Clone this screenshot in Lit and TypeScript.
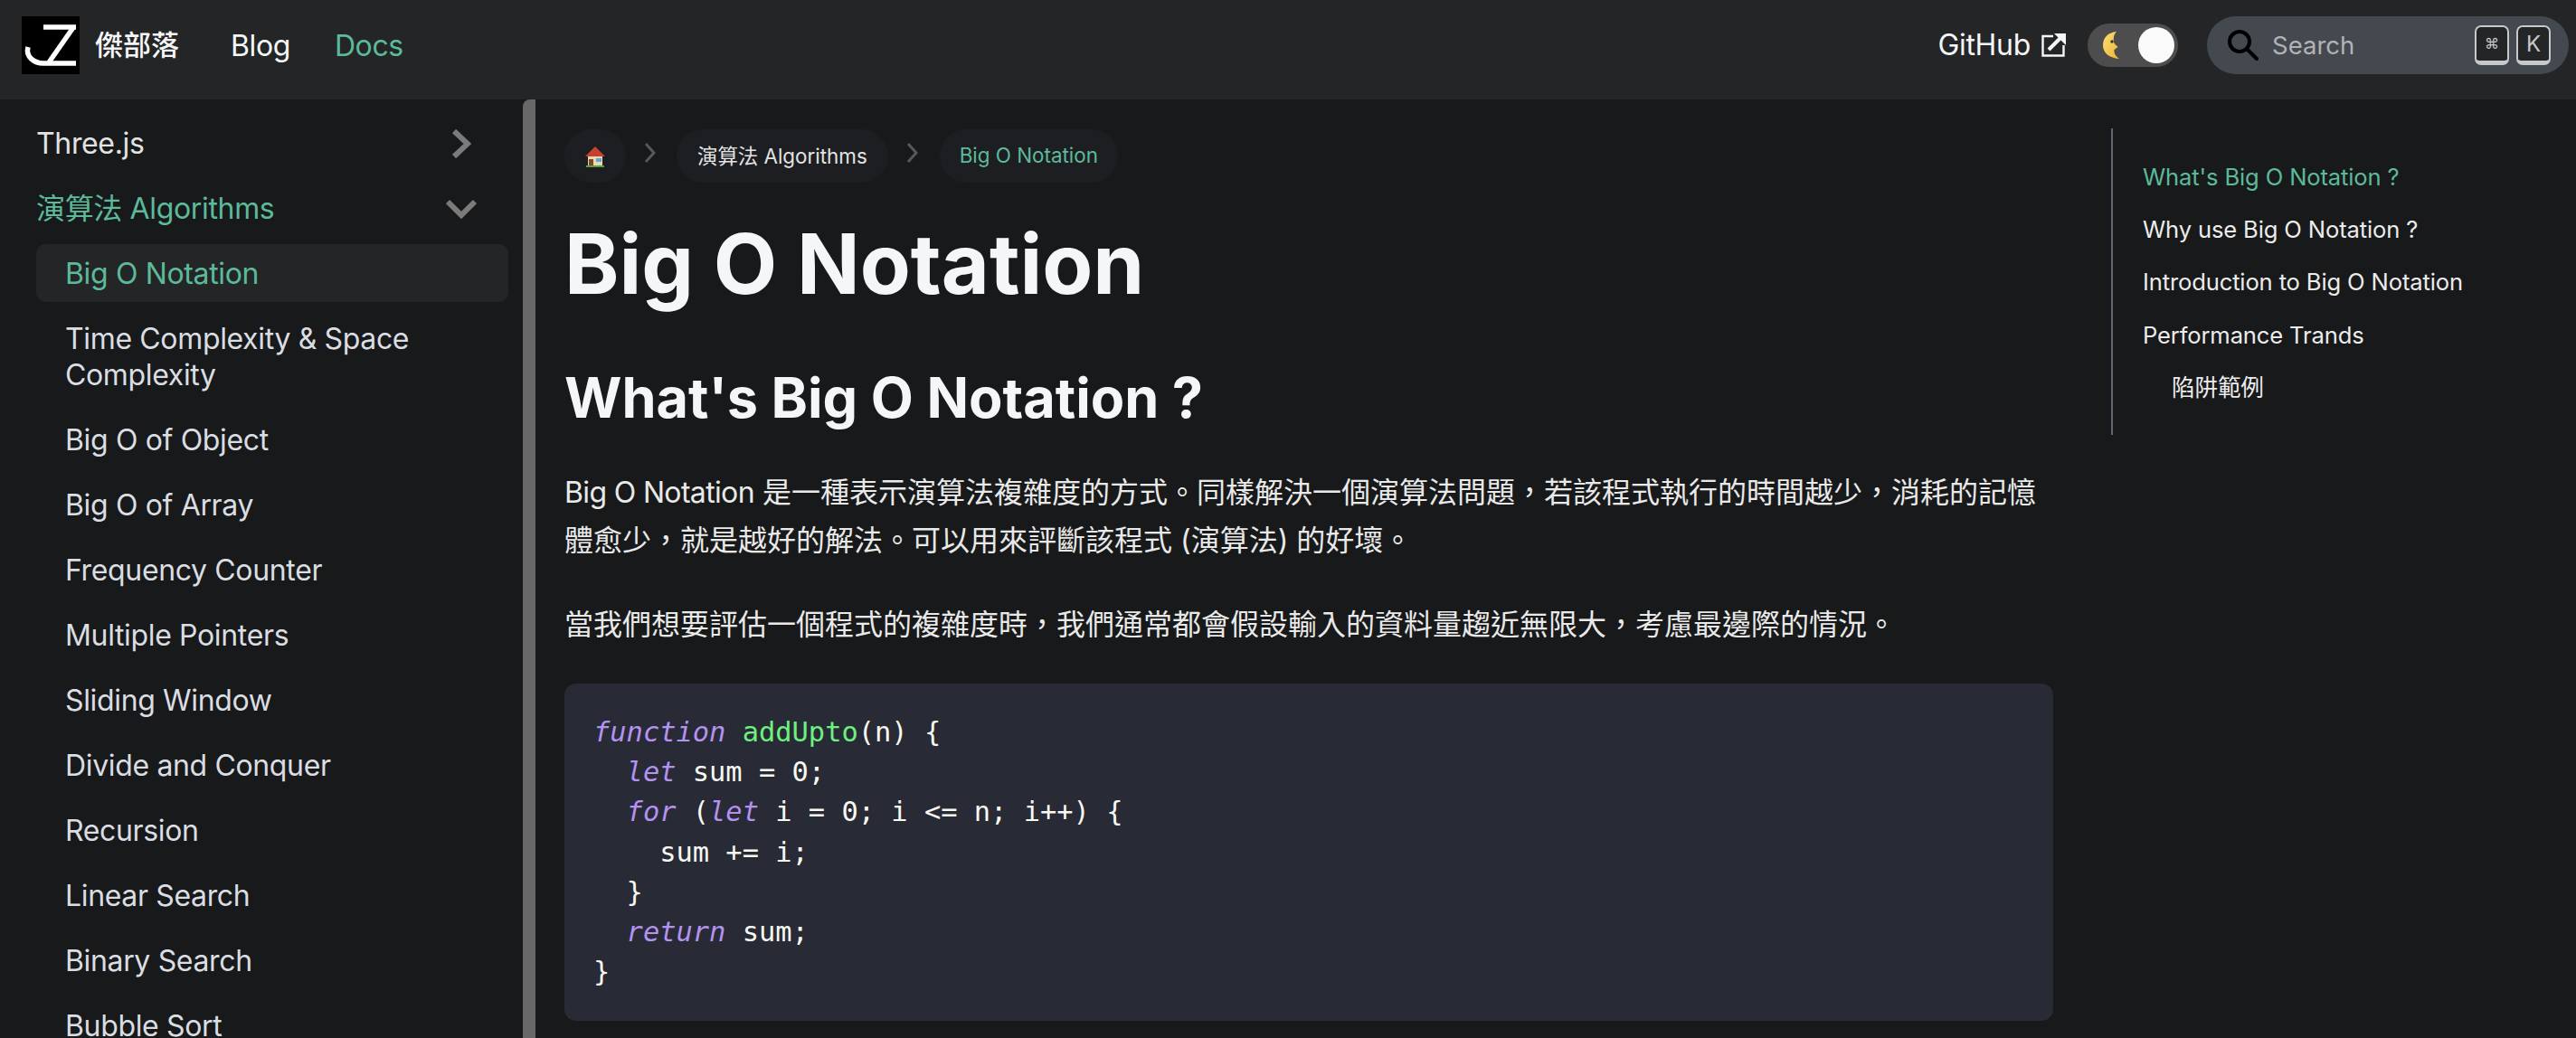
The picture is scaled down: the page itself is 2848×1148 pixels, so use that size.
import { LitElement, html, css } from "lit";
import { customElement } from "lit/decorators.js";

const items = [
  "Time Complexity & Space Complexity",
  "Big O of Object",
  "Big O of Array",
  "Frequency Counter",
  "Multiple Pointers",
  "Sliding Window",
  "Divide and Conquer",
  "Recursion",
  "Linear Search",
  "Binary Search",
  "Bubble Sort",
];

@customElement("app-root")
export class AppRoot extends LitElement {
  static styles = css`
    :host {
      display: block;
      width: 2848px;
      height: 1148px;
      overflow: hidden;
      background: #18191a;
      color: #e3e3e3;
      font-family: Inter, "Noto Sans CJK TC", sans-serif;
    }
    * { box-sizing: border-box; }
    .green { color: #5cba9a; }

    .nav {
      height: 110px;
      background: #242526;
      display: flex;
      align-items: flex-start;
      padding: 18px 8px 0 24px;
    }
    .logo { width: 64px; height: 64px; display: block; flex: none; }
    .brand { margin-left: 17px; width: 133px; font-size: 31px; font-weight: 500; line-height: 64px; color: #f5f6f7; }
    .link { font-size: 32px; line-height: 64px; color: #f5f6f7; letter-spacing: -0.4px; margin-top: 1px; }
    .blog { margin-left: 17px; }
    .docs { margin-left: 49px; color: #5cba9a; }
    .spacer { flex: 1; }
    .gh { font-size: 32px; line-height: 64px; color: #f5f6f7; display: flex; align-items: center; letter-spacing: -0.3px; }
    .gh svg { margin-left: 12px; margin-top: -2px; }
    .toggle {
      margin: 8px 32px 0 24px;
      width: 100px;
      height: 48px;
      border-radius: 24px;
      background: #4d4d4d;
      display: flex;
      align-items: center;
      justify-content: space-between;
      padding: 0 4px 0 17px;
    }
    .knob { width: 40px; height: 40px; border-radius: 50%; background: #fafafa; }
    .search {
      width: 400px;
      height: 64px;
      border-radius: 32px;
      background: #444950;
      display: flex;
      align-items: center;
      padding: 0 20px 0 23px;
    }
    .search .ph { margin-left: 15px; flex: 1; font-size: 27.5px; color: #b2b3b5; }
    .key {
      width: 38px;
      height: 44px;
      border: 2px solid #c6c8cb;
      border-bottom-width: 5px;
      border-radius: 7px;
      background: #242526;
      display: flex;
      align-items: center;
      justify-content: center;
      color: #c6c8cb;
      font-size: 24px;
      margin-left: 8px;
    }
    .key.cmd { font-size: 16px; font-family: "DejaVu Sans", sans-serif; }

    .body { display: flex; height: 1038px; }
    .side { width: 592px; flex: none; display: flex; overflow: hidden; }
    .menu { width: 578px; flex: none; padding: 16px 16px 0 40px; display: flex; flex-direction: column; gap: 8px; }
    .thumb { width: 14px; flex: none; background: #686868; border-radius: 8px 0 0 0; }
    .row {
      font-size: 32px;
      line-height: 40px;
      letter-spacing: -0.35px;
      padding: 13px 0 11px;
      display: flex;
      justify-content: space-between;
      align-items: center;
      flex: none;
    }
    .cat { color: #e3e3e3; padding-right: 41px; }
    .cat svg { display: block; }
    .cat.open { color: #5cba9a; padding-right: 41px; }
    .item { padding: 13px 32px 11px; color: #dadde1; }
    .item.active { background: #242526; border-radius: 10px; color: #5cba9a; }

    .main { width: 1678px; flex: none; padding: 33px 0 0 32px; }
    .crumbs { display: flex; align-items: center; height: 59px; }
    .pill {
      height: 59px;
      border-radius: 30px;
      background: #1d1e22;
      padding: 0 23px 3px;
      display: flex;
      align-items: center;
      font-size: 22.4px;
      color: #e3e3e3;
    }
    .pill.home { padding: 0 22px; }
    .pill.cur { color: #5cba9a; padding: 0 22px 2px; }
    .sep { margin: -8px 24px 0 20px; display: block; }
    .sep.first { margin-right: 23px; }
    h1 {
      margin: 30px 0 0;
      font-size: 91.5px;
      line-height: 120px;
      font-weight: 700;
      color: #f5f6f7;
    }
    h2 {
      margin: 48px 0 0;
      font-size: 61.2px;
      line-height: 80px;
      font-weight: 700;
      color: #f5f6f7;
    }
    p { margin: 0; font-size: 32px; line-height: 53px; color: #e9e9e9; }
    p .en { letter-spacing: -0.65px; }
    .p1 { margin-top: 38px; }
    .p2 { margin-top: 40px; }
    .code {
      margin: 39px 0 0;
      background: #282a36;
      border-radius: 13px;
      height: 373px;
      padding: 32px 32px;
      font-family: "DejaVu Sans Mono", monospace;
      font-size: 30.4px;
      line-height: 44.2px;
      color: #f8f8f2;
      overflow: hidden;
    }
    .code div { white-space: pre; height: 44.2px; }
    .k { color: #b392f0; font-style: italic; }
    .f { color: #6ef07f; }

    .toc {
      margin: 32px 0 0 64px;
      width: 400px;
      height: 339px;
      border-left: 2px solid #606770;
      padding: 37px 0 0 33px;
      display: flex;
      flex-direction: column;
      gap: 24.2px;
      font-size: 25.6px;
      line-height: 34px;
      letter-spacing: -0.15px;
      color: #ececec;
      flex: none;
    }
    .toc .sub { padding-left: 32px; }
  `;

  render() {
    return html`
      <div class="nav">
        <svg class="logo" viewBox="0 0 64 64">
          <rect width="64" height="64" fill="#000" />
          <g fill="none" stroke="#fff" stroke-width="5.5">
            <path d="M24 12H60" />
            <path d="M58 11 30 51" />
            <path d="M7 34C4 45 14 52 24 52H60" />
          </g>
        </svg>
        <div class="brand">傑部落</div>
        <div class="link blog">Blog</div>
        <div class="link docs">Docs</div>
        <div class="spacer"></div>
        <div class="gh">
          GitHub
          <svg width="27" height="27" viewBox="0 0 27 27" fill="none" stroke="#f5f6f7" stroke-width="2.4">
            <path d="M13 4H1.5V25.5H24.5V14" />
            <path d="M8 19 21 6" stroke-width="4" />
            <path d="M14 1H27V14L14 1Z" fill="#f5f6f7" stroke="none" />
          </svg>
        </div>
        <div class="toggle">
          <svg width="18" height="30" viewBox="0 0 18 30">
            <defs>
              <linearGradient id="mg" x1="0" x2="1" y1="0" y2="1">
                <stop offset="0" stop-color="#fbe072" />
                <stop offset="1" stop-color="#eeb23a" />
              </linearGradient>
            </defs>
            <path d="M15 0C5 1 0 7 0 15C0 23 6 29 18 30C14 27 12 24 12.5 20L16.5 17L12.5 13C11 8 12 3 15 0Z" fill="url(#mg)" />
            <circle cx="10" cy="11" r="1.7" fill="#333" />
          </svg>
          <div class="knob"></div>
        </div>
        <div class="search">
          <svg width="34" height="34" viewBox="0 0 34 34" fill="none" stroke="#000" stroke-width="4" stroke-linecap="round">
            <circle cx="13" cy="13" r="11" />
            <path d="M21 21 32 32" />
          </svg>
          <span class="ph">Search</span>
          <span class="key cmd">⌘</span>
          <span class="key">K</span>
        </div>
      </div>
      <div class="body">
        <div class="side">
          <div class="menu">
            <div class="row cat">
              Three.js
              <svg width="22" height="32" viewBox="0 0 22 32" fill="none" stroke="#7b7b7b" stroke-width="6"><path d="M3 2 18 16 3 30" /></svg>
            </div>
            <div class="row cat open">
              演算法 Algorithms
              <svg width="34" height="22" viewBox="0 0 34 22" fill="none" stroke="#7b7b7b" stroke-width="6" style="margin-right:-6px"><path d="M2 3 17 18 32 3" /></svg>
            </div>
            <div class="row item active">Big O Notation</div>
            ${items.map((t) => html`<div class="row item">${t}</div>`)}
          </div>
          <div class="thumb"></div>
        </div>
        <div class="main">
          <div class="crumbs">
            <div class="pill home">
              <svg width="24" height="24" viewBox="0 0 24 24">
                <path d="M4 11H20V22H4Z" fill="#ecd9b0" />
                <path d="M12 1 23 12H1Z" fill="#c8402f" />
                <path d="M5 15h5v7H5Z" fill="#7a4a2a" />
                <path d="M13 14h6v4h-6Z" fill="#5aa8e0" />
                <path d="M2 22h20v2H2Z" fill="#5f9e3f" />
              </svg>
            </div>
            <svg class="sep first" width="13" height="22" viewBox="0 0 13 22" fill="none" stroke="#57585a" stroke-width="3"><path d="M2 1 11 11 2 21" /></svg>
            <div class="pill">演算法 Algorithms</div>
            <svg class="sep" width="13" height="22" viewBox="0 0 13 22" fill="none" stroke="#57585a" stroke-width="3"><path d="M2 1 11 11 2 21" /></svg>
            <div class="pill cur">Big O Notation</div>
          </div>
          <h1>Big O Notation</h1>
          <h2>What's Big O Notation ?</h2>
          <p class="p1"><span class="en">Big O Notation</span> 是一種表示演算法複雜度的方式。同樣解決一個演算法問題，若該程式執行的時間越少，消耗的記憶<br />體愈少，就是越好的解法。可以用來評斷該程式 (演算法) 的好壞。</p>
          <p class="p2">當我們想要評估一個程式的複雜度時，我們通常都會假設輸入的資料量趨近無限大，考慮最邊際的情況。</p>
          <div class="code">
            <div><span class="k">function</span> <span class="f">addUpto</span>(n) {</div>
            <div>  <span class="k">let</span> sum = 0;</div>
            <div>  <span class="k">for</span> (<span class="k">let</span> i = 0; i &lt;= n; i++) {</div>
            <div>    sum += i;</div>
            <div>  }</div>
            <div>  <span class="k">return</span> sum;</div>
            <div>}</div>
          </div>
        </div>
        <div class="toc">
          <div class="green">What's Big O Notation ?</div>
          <div>Why use Big O Notation ?</div>
          <div>Introduction to Big O Notation</div>
          <div>Performance Trands</div>
          <div class="sub">陷阱範例</div>
        </div>
      </div>
    `;
  }
}
